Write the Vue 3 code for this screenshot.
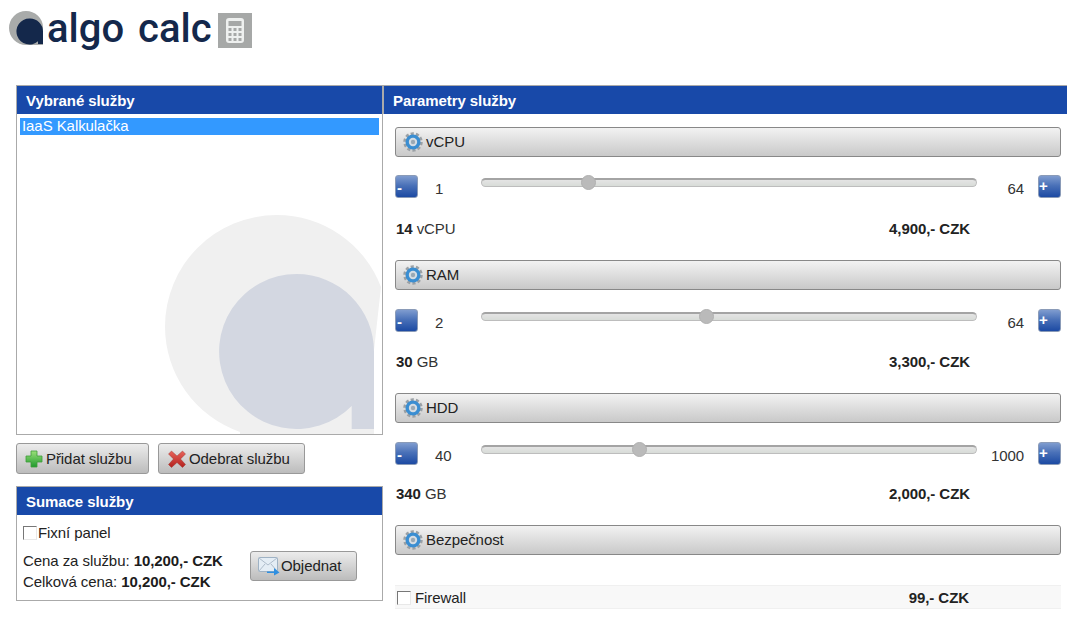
<script setup>
const sections = [
  { title: 'vCPU', min: '1', max: '64', pos: 107, amount: '14', unit: 'vCPU', price: '4,900,- CZK' },
  { title: 'RAM', min: '2', max: '64', pos: 225, amount: '30', unit: 'GB', price: '3,300,- CZK' },
  { title: 'HDD', min: '40', max: '1000', pos: 158, amount: '340', unit: 'GB', price: '2,000,- CZK' }
]
</script>

<template>
  <div class="page">
    <header class="logo">
      <svg class="mark" width="36" height="36" viewBox="0 0 36 36">
        <path d="M17 1a17 17 0 1 0 0 34h17V17A17 17 0 0 0 17 1z" fill="#a9abaa" />
        <path d="M20.500 8.500a13 13 0 1 0 8.500 22.800v2.700h5V21.500A13 13 0 0 0 20.500 8.500z" fill="#14284b" />
      </svg>
      <span class="logo-text">algo calc</span>
      <svg class="calc" width="34" height="35" viewBox="0 0 34 35">
        <rect width="34" height="35" fill="#a6a8a7" />
        <rect x="8" y="5" width="18" height="25" rx="3" fill="#eef0ef" />
        <rect x="10.500" y="8" width="13" height="5" fill="#a6a8a7" />
        <g fill="#a6a8a7">
          <rect x="10.500" y="15" width="3" height="3" /><rect x="15.500" y="15" width="3" height="3" /><rect x="20.500" y="15" width="3" height="3" />
          <rect x="10.500" y="20" width="3" height="3" /><rect x="15.500" y="20" width="3" height="3" /><rect x="20.500" y="20" width="3" height="3" />
          <rect x="10.500" y="25" width="3" height="3" /><rect x="15.500" y="25" width="3" height="3" /><rect x="20.500" y="25" width="3" height="3" />
        </g>
      </svg>
    </header>

    <main class="columns">
      <div class="left">
        <section class="box services">
          <svg class="watermark" width="218" height="220" viewBox="165 215 218 220">
            <path d="M276.600 215A111.600 111.600 0 0 0 165 326.600A111.600 111.600 0 0 0 240 432V434H374V350L381 287A111.600 111.600 0 0 0 276.600 215z" fill="#f0f0f0" />
            <path d="M296.500 274A77.500 77.500 0 1 0 351.700 406V429H374V351.500A77.500 77.500 0 0 0 296.500 274z" fill="#d3d7e1" />
          </svg>
          <h2 class="band">Vybrané služby</h2>
          <div class="list">
            <div class="item">IaaS Kalkulačka</div>
          </div>
        </section>

        <div class="actions">
          <button class="btn add" type="button">
            <svg width="18" height="18" viewBox="0 0 18 18">
              <defs>
                <linearGradient id="gplus" x1="0" y1="0" x2="0" y2="1">
                  <stop offset="0" stop-color="#9be07a" />
                  <stop offset="1" stop-color="#1f9a2e" />
                </linearGradient>
              </defs>
              <path d="M6 1h6v5h5v6h-5v5H6v-5H1V6h5z" fill="url(#gplus)" stroke="#3f9c3a" stroke-width=".8" />
            </svg>
            Přidat službu
          </button>
          <button class="btn remove" type="button">
            <svg width="18" height="18" viewBox="0 0 18 18">
              <defs>
                <linearGradient id="gx" x1="0" y1="0" x2="0" y2="1">
                  <stop offset="0" stop-color="#e8645c" />
                  <stop offset="1" stop-color="#b3201c" />
                </linearGradient>
              </defs>
              <path d="M3.500 1L9 6l5.500-5L17.500 4 12.500 9l5 5.500-3 3L9 12.500 3.500 17.500l-3-3L5.500 9 .5 4z" fill="url(#gx)" stroke="#8f2a26" stroke-width=".4" />
            </svg>
            Odebrat službu
          </button>
        </div>

        <section class="box summary">
          <h2 class="band">Sumace služby</h2>
          <label class="fixed"><span class="check"></span>Fixní panel</label>
          <div class="totals">
            <div class="prices">
              <div>Cena za službu: <b>10,200,- CZK</b></div>
              <div>Celková cena: <b>10,200,- CZK</b></div>
            </div>
            <button class="btn order" type="button">
              <svg width="22" height="20" viewBox="0 0 22 20">
                <rect x=".5" y="1.500" width="19" height="14" rx="1" fill="#e4edf5" stroke="#9fb2c4" />
                <path d="M1 2l9 7 9-7M1 15l6-7M19 15l-6-7" fill="none" stroke="#aebccb" />
                <path d="M9 15.500h7V12l5.500 4.500L16 19.500v-2.500H9z" fill="#2f8fe0" />
              </svg>
              Objednat
            </button>
          </div>
        </section>
      </div>

      <section class="right">
        <h2 class="band">Parametry služby</h2>
        <div class="params">
          <div v-for="s in sections" :key="s.title" class="param">
            <button class="bar" type="button">
              <svg class="gear" width="20" height="20" viewBox="0 0 20 20">
                <circle cx="10" cy="10" r="8" fill="none" stroke="#9aa0a5" stroke-width="3.500" stroke-dasharray="3 2.030" />
                <circle cx="10" cy="10" r="7.500" fill="#3a8ed2" />
                <circle cx="10" cy="10" r="4.200" fill="#d5dde4" />
                <circle cx="10" cy="10" r="2.200" fill="#9aa9b5" />
              </svg>
              {{ s.title }}
            </button>
            <div class="slider-row">
              <span class="step">-</span>
              <span class="min">{{ s.min }}</span>
              <div class="track">
                <span class="thumb" :style="{ left: s.pos + 'px' }"></span>
              </div>
              <span class="max">{{ s.max }}</span>
              <span class="step">+</span>
            </div>
            <div class="result">
              <span><b>{{ s.amount }}</b> {{ s.unit }}</span>
              <b>{{ s.price }}</b>
            </div>
          </div>

          <div class="param security">
            <button class="bar" type="button">
              <svg class="gear" width="20" height="20" viewBox="0 0 20 20">
                <circle cx="10" cy="10" r="8" fill="none" stroke="#9aa0a5" stroke-width="3.500" stroke-dasharray="3 2.030" />
                <circle cx="10" cy="10" r="7.500" fill="#3a8ed2" />
                <circle cx="10" cy="10" r="4.200" fill="#d5dde4" />
                <circle cx="10" cy="10" r="2.200" fill="#9aa9b5" />
              </svg>
              Bezpečnost
            </button>
            <div class="option">
              <span class="name"><span class="check"></span>Firewall</span>
              <b>99,- CZK</b>
            </div>
          </div>
        </div>
      </section>
    </main>
  </div>
</template>

<style>
html, body { background: #fff; }
</style>

<style scoped>
.page {
  width: 1079px;
  height: 631px;
  overflow: hidden;
  font-family: "Liberation Sans", Arial, sans-serif;
  font-size: 15px;
  letter-spacing: -0.07px;
  color: #222;
  background: #fff;
}
.logo {
  height: 85px;
  display: flex;
  align-items: flex-start;
  padding-left: 9px;
  box-sizing: border-box;
}
.mark { margin-top: 10px; flex: none; }
.logo-text {
  font-family: Roboto, sans-serif;
  font-weight: 500;
  font-size: 40px;
  letter-spacing: 0;
  line-height: 57px;
  color: #14284b;
  margin-left: 2px;
  width: 171px;
  white-space: nowrap;
  word-spacing: 4px;
}
.calc { margin-top: 13px; flex: none; }
.columns { display: flex; padding-left: 16px; align-items: flex-start; }
.left { width: 367px; flex: none; }
.box {
  border: 1px solid #aaa;
  box-sizing: border-box;
  position: relative;
  background: #fff;
}
.band {
  margin: 0;
  height: 28px;
  line-height: 30px;
  background: #1849a9;
  color: #fff;
  font-size: 15px;
  font-weight: bold;
  padding-left: 9px;
  position: relative;
}
.services { height: 350px; overflow: hidden; }
.watermark { position: absolute; left: 148px; top: 129px; }
.list { position: relative; padding: 4px 3px; }
.item {
  background: #3399ff;
  color: #fff;
  height: 17px;
  line-height: 15px;
  padding-left: 2px;
}
.actions { display: flex; gap: 9px; margin-top: 8px; margin-bottom: 12px; }
.btn {
  height: 31px;
  border: 1px solid #999;
  border-radius: 3px;
  background: linear-gradient(#ececec, #bcbcbc);
  font: 15px "Liberation Sans", Arial, sans-serif;
  letter-spacing: -0.07px;
  color: #222;
  display: flex;
  align-items: center;
  padding: 0 0 0 8px;
  box-sizing: border-box;
  gap: 3px;
}
.add { width: 133px; }
.remove { width: 147px; padding-left: 9px; gap: 3px; }
.summary { height: 115px; }
.fixed { display: flex; align-items: center; margin: 9px 0 0 6px; height: 16px; gap: 1px; }
.fixed .check { margin-top: 2px; }
.check {
  width: 14px;
  height: 14px;
  flex: none;
  box-sizing: border-box;
  background: #fff;
  border: 1px solid #e8e8e8;
  border-top-color: #777;
  border-left-color: #777;
  display: inline-block;
}
.totals { display: flex; padding-left: 6px; margin-top: 9px; }
.prices { width: 227px; line-height: 21px; margin-top: 1px; }
.prices b { color: #1c1c1c; }
.order { width: 107px; height: 30px; margin-top: 2px; padding: 0 0 2px 7px; gap: 1px; }
.order svg { margin-top: 2px; }
.right { width: 684px; flex: none; }
.right .band { padding-left: 9px; border-top: 1px solid #aaa; border-left: 1px solid #aaa; height: 28px; }
.params { padding: 13px 6px 0 12px; }
.param { height: 133px; }
.param:nth-child(3) { height: 132px; }
.bar {
  width: 666px;
  height: 30px;
  display: flex;
  align-items: center;
  border: 1px solid #888;
  border-radius: 3px;
  background: linear-gradient(#f2f2f2, #c9c9c9);
  font: 15px "Liberation Sans", Arial, sans-serif;
  letter-spacing: -0.07px;
  color: #222;
  box-sizing: border-box;
  padding: 0 0 2px 7px;
  gap: 3px;
}
.gear { flex: none; margin-top: 2px; }
.slider-row {
  display: flex;
  align-items: flex-start;
  margin-top: 18px;
  height: 23px;
  line-height: 28px;
}
.param:nth-child(2) .slider-row, .param:nth-child(3) .slider-row { margin-top: 19px; }
.step {
  width: 23px;
  height: 23px;
  flex: none;
  box-sizing: border-box;
  border: 1px solid #8a9bb8;
  border-radius: 3px;
  background: linear-gradient(#7f9ccf 0%, #4a71b8 45%, #1c4aa3 100%);
  color: #fff;
  font-weight: bold;
  font-size: 15px;
  line-height: 19px;
  padding-left: 0;
}
.step:first-child { padding-left: 1px; line-height: 23px; }
.min { width: 63px; padding-left: 17px; box-sizing: border-box; flex: none; color: #333; }
.track {
  width: 496px;
  height: 9px;
  margin-top: 3px;
  box-sizing: border-box;
  border: 1px solid #bdbdbd;
  border-top: 2px solid #a4a4a4;
  border-radius: 5px;
  background: linear-gradient(#e4e4e4, #d8dcd8);
  position: relative;
  flex: none;
}
.thumb {
  position: absolute;
  top: -5px;
  width: 15px;
  height: 15px;
  margin-left: -8px;
  border-radius: 50%;
  background: #bababa;
  box-sizing: border-box;
  border: 1px solid #b0b0b0;
}
.max {
  width: 47px;
  text-align: right;
  flex: none;
  color: #333;
}
.max, .min { height: 23px; }
.slider-row .max + .step { margin-left: 14px; }
.result {
  display: flex;
  justify-content: space-between;
  margin-top: 22px;
  height: 18px;
  line-height: 18px;
  width: 574px;
  padding-left: 1px;
  color: #333;
}
.param:nth-child(2) .result { margin-top: 21px; }
.param:nth-child(3) .result { margin-top: 20px; }
.result b { color: #222; }
.option {
  margin-top: 30px;
  height: 24px;
  width: 666px;
  box-sizing: border-box;
  background: #f8f8f8;
  border: 1px solid #f0f0f0;
  border-width: 1px 0;
  display: flex;
  align-items: center;
  padding: 0 92px 0 2px;
  justify-content: space-between;
}
.name { display: flex; align-items: center; gap: 4px; }
.name .check { margin-top: 2px; }
</style>
